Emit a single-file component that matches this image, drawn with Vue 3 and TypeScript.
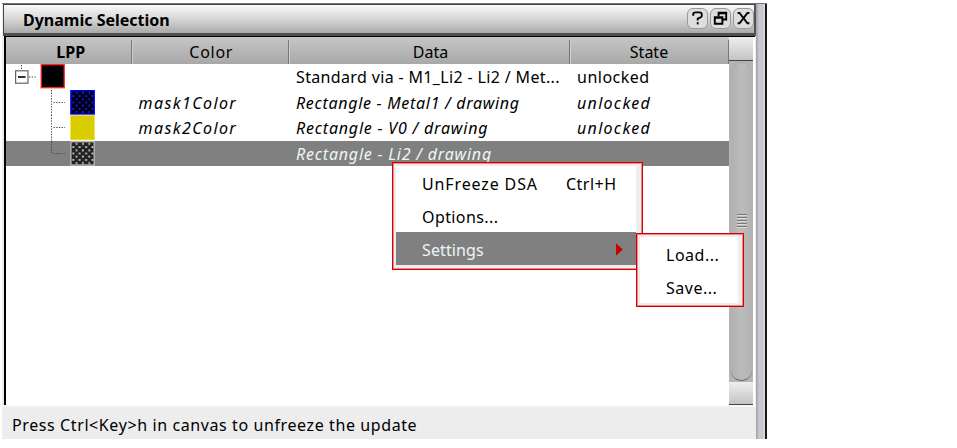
<script setup lang="ts">
type Swatch = 'via' | 'blue' | 'yellow' | 'mesh'

interface Row {
  swatch: Swatch
  color: string
  data: string
  state: string
  child: boolean
  last?: boolean
  selected?: boolean
  dataSpacing: string
}

const rows: Row[] = [
  { swatch: 'via', color: '', data: 'Standard via - M1_Li2 - Li2 / Met...', state: 'unlocked', child: false, dataSpacing: '0.35px' },
  { swatch: 'blue', color: 'mask1Color', data: 'Rectangle - Metal1 / drawing', state: 'unlocked', child: true, dataSpacing: '0.7px' },
  { swatch: 'yellow', color: 'mask2Color', data: 'Rectangle - V0 / drawing', state: 'unlocked', child: true, dataSpacing: '0.8px' },
  { swatch: 'mesh', color: '', data: 'Rectangle - Li2 / drawing', state: '', child: true, last: true, selected: true, dataSpacing: '0.8px' },
]
</script>

<template>
  <div class="window">
    <div class="main">
      <header class="titlebar">
        <h1>Dynamic Selection</h1>
        <div class="tools">
          <button aria-label="Help">
            <svg viewBox="0 0 20 20"><path d="M5.5 7V5.4Q5.5 3.6 8 3.6H12Q14.5 3.6 14.5 5.8V7Q14.5 8.4 12.6 9.2L10.2 10.2V12" /><path d="M10.2 13.8V16.2" /></svg>
          </button>
          <button aria-label="Float">
            <svg viewBox="0 0 20 20"><path d="M8 8V3.8H16V11H12.5M8 4.4H16" /><path d="M4 8.7H12V15.5H4Z M4 9.3H12" /></svg>
          </button>
          <button aria-label="Close">
            <svg viewBox="0 0 20 20"><path d="M3.8 4.2H5.8L14.2 15H16.2M16.2 4.2H14.2L5.8 15H3.8" /></svg>
          </button>
        </div>
      </header>

      <div class="panel">
        <div class="table">
          <div class="grid head">
            <div class="hcell bold">LPP</div>
            <div class="hcell wide">Color</div>
            <div class="hcell data-head">Data</div>
            <div class="hcell">State</div>
          </div>
          <div v-for="row in rows" :key="row.data" class="grid row" :class="{ child: row.child, selected: row.selected }">
            <svg class="tree" width="125" height="25.5" viewBox="0 0 125 25.5">
              <defs>
                <pattern :id="'dots-' + row.swatch" width="6.4" height="6.4" patternUnits="userSpaceOnUse" x="66" y="1.5">
                  <rect x="3.6" y="0.5" width="1.8" height="1.8" :fill="row.swatch === 'blue' ? '#1c1cff' : '#d2d2d2'" />
                  <rect x="0.4" y="3.7" width="1.8" height="1.8" :fill="row.swatch === 'blue' ? '#1c1cff' : '#d2d2d2'" />
                </pattern>
              </defs>
              <g v-if="!row.child">
                <path class="dots" d="M15.5 1V6M23 13H31" />
                <rect x="9.6" y="6.8" width="12.4" height="12.4" fill="#fff" stroke="#666" stroke-width="1.2" />
                <path d="M12 13H19.5" stroke="#000" stroke-width="1.6" />
                <rect x="35.2" y="0.7" width="23" height="23" fill="#000" stroke="#f22" stroke-width="1.3" />
              </g>
              <g v-else>
                <path class="dots" :d="row.last ? 'M45.5 0V13' : 'M45.5 0V25.5'" />
                <path class="dots" d="M47.5 12.5H59" />
                <template v-if="row.swatch === 'yellow'">
                  <rect x="64.6" y="0.4" width="24" height="24.5" fill="#d9cd00" stroke="#eee35a" stroke-width="0.8" />
                </template>
                <template v-else>
                  <rect x="64.9" y="0.7" width="23.3" height="23.3" :fill="row.swatch === 'blue' ? '#000014' : '#222'" />
                  <rect x="64.9" y="0.7" width="23.3" height="23.3" :fill="'url(#dots-' + row.swatch + ')'" :stroke="row.swatch === 'blue' ? '#0000fa' : '#b4b4ba'" stroke-width="1.4" />
                </template>
              </g>
            </svg>
            <div class="cell mask">{{ row.color }}</div>
            <div class="cell data" :style="{ letterSpacing: row.dataSpacing }">{{ row.data }}</div>
            <div class="cell state">{{ row.state }}</div>
          </div>
        </div>

        <div class="scroll">
          <div class="arrow"></div>
          <div class="track">
            <i v-for="n in 5" :key="n"></i>
          </div>
          <div class="arrow"></div>
        </div>
      </div>

      <footer class="status">Press Ctrl&lt;Key&gt;h in canvas to unfreeze the update</footer>
    </div>
    <div class="edge"></div>
  </div>

  <div class="menu context">
    <div class="item unfreeze"><span>UnFreeze DSA</span><span class="key">Ctrl+H</span></div>
    <div class="item options">Options...</div>
    <div class="item active"><span>Settings</span><svg width="7" height="13" viewBox="0 0 7 13"><path d="M0 0.3L6.8 6.5L0 12.7Z" fill="#c80000" /></svg></div>
  </div>
  <div class="menu sub">
    <div class="item">Load...</div>
    <div class="item">Save...</div>
  </div>
</template>

<style>
body {
  background: #fff;
}
</style>

<style scoped>
.window {
  display: flex;
  width: 765px;
  height: 436px;
  margin: 3px 0 0 2px;
  font: 16px "Noto Sans", "Open Sans", sans-serif;
  color: #000;
  box-sizing: border-box;
  border-top: 1px solid #747474;
  background: #ededee;
}
.main {
  display: flex;
  flex-direction: column;
  flex: 1;
}
.titlebar {
  box-sizing: border-box;
  display: flex;
  flex: none;
  align-items: center;
  justify-content: space-between;
  width: 753px;
  height: 32px;
  margin-left: 1px;
  padding: 0 0 0 19px;
  border: 1px solid #444;
  border-right: 2px solid #555;
  border-bottom: 3px solid #505050;
  background: linear-gradient(#fafafa, #d6d6d6 50%, #aaa);
}
h1 {
  margin: 2px 0 0;
  font-size: 16px;
  line-height: 28px;
}
.tools {
  display: flex;
  gap: 2px;
}
button {
  display: flex;
  box-sizing: border-box;
  width: 21px;
  height: 21px;
  margin: 0 0 2px;
  padding: 0;
  border: 1px solid #999;
  border-radius: 6px;
  background: #dedede;
}
button svg {
  width: 19px;
  height: 19px;
  fill: none;
  stroke: #000;
  stroke-width: 2;
}
.panel {
  display: flex;
  flex: none;
  box-sizing: border-box;
  width: 751px;
  height: 369px;
  margin-left: 2px;
  border-top: 1px solid #000;
  border-left: 2px solid #000;
  background: #fff;
}
.table {
  width: 723px;
}
.grid {
  display: grid;
  grid-template-columns: 125.5px 157.5px 281px 159px;
}
.head {
  height: 27px;
  box-sizing: border-box;
  padding-top: 1px;
  background: linear-gradient(#c6c6c6, #a8a8a8);
}
.hcell {
  height: 24px;
  margin-top: 2px;
  line-height: 25px;
  text-align: center;
  border-right: 1px solid #777;
  box-shadow: 1px 0 #d0d0d0;
}
.bold {
  font-weight: 700;
  padding-left: 5px;
}
.wide {
  padding-left: 3px;
  letter-spacing: 0.75px;
}
.data-head {
  padding-left: 3px;
}
.row {
  height: 25.5px;
}
.child {
  font-style: italic;
}
.selected {
  background: #808080;
  color: #eef6f6;
}
.tree {
  display: block;
}
.dots {
  fill: none;
  stroke: #444;
  stroke-width: 1;
  stroke-dasharray: 1.3 1.4;
}
.cell {
  padding-left: 7px;
  line-height: 27.5px;
  white-space: nowrap;
}
.mask {
  letter-spacing: 1.4px;
}
.state {
  letter-spacing: 0.5px;
}
.child .state {
  letter-spacing: 1.3px;
}
.scroll {
  display: flex;
  flex-direction: column;
  width: 24px;
  background: #b4b4b4;
}
.arrow {
  box-sizing: border-box;
  height: 23.5px;
  border-bottom: 1px solid #444;
  background: linear-gradient(#eee, #c4c4c4);
}
.track {
  display: flex;
  flex: 1;
  flex-direction: column;
  align-items: center;
  justify-content: center;
  gap: 2px;
  box-sizing: border-box;
  margin: 1px 1px 1px 2px;
  border-bottom: 1.5px solid #666;
  border-radius: 11px;
  background: linear-gradient(90deg, #b0b0b0, #bcbcbc 50%, #b2b2b2);
  box-shadow: inset 0 1px #aaa;
}
.track i {
  width: 10px;
  height: 1px;
  background: #777;
  box-shadow: 0 1px #ddd;
}
.status {
  flex: none;
  box-sizing: border-box;
  height: 34px;
  padding-left: 10px;
  border-top: 2px solid #f7f7f7;
  line-height: 37px;
  letter-spacing: 0.6px;
}
.edge {
  box-sizing: border-box;
  width: 11px;
  border-right: 2px solid #1a1a1a;
  background: linear-gradient(90deg, #9ea0a3, #c8cacf 35%, #c8cacf 75%, #e0e0e4);
}
.menu {
  position: absolute;
  box-sizing: border-box;
  border: 1px solid #d20000;
  box-shadow: inset 0 0 0 1px #e88;
  background: #ededed;
  font: 16px "Noto Sans", "Open Sans", sans-serif;
}
.context {
  left: 392px;
  top: 162px;
  width: 251px;
  height: 108px;
  padding: 3px 6px 4px 3px;
}
.sub {
  left: 636px;
  top: 233px;
  width: 108px;
  height: 74px;
  padding: 3px 5px 4px 3px;
}
.item {
  display: flex;
  box-sizing: border-box;
  height: 33px;
  padding: 4px 5px 0 26px;
  background: #fff;
  line-height: 29px;
}
.unfreeze {
  gap: 28px;
  letter-spacing: 0.87px;
}
.key {
  letter-spacing: 0.5px;
}
.options {
  letter-spacing: 0.4px;
}
.active {
  justify-content: space-between;
  background: #808080;
  color: #eef6f6;
  letter-spacing: 0.12px;
}
.active svg {
  margin-top: 7px;
  margin-right: 8px;
}
.sub .item {
  letter-spacing: 0.5px;
}
</style>
